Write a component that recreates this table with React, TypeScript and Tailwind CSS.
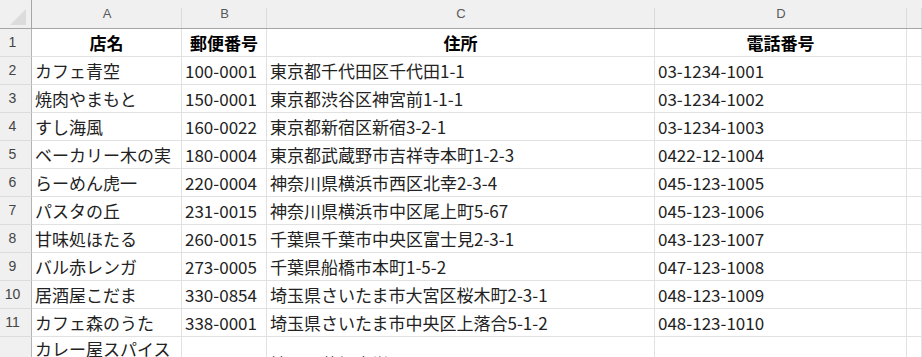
const columns = ['A', 'B', 'C', 'D', '']

const headers = ['店名', '郵便番号', '住所', '電話番号']

const rows: string[][] = [
  ['カフェ青空', '100-0001', '東京都千代田区千代田1-1', '03-1234-1001'],
  ['焼肉やまもと', '150-0001', '東京都渋谷区神宮前1-1-1', '03-1234-1002'],
  ['すし海風', '160-0022', '東京都新宿区新宿3-2-1', '03-1234-1003'],
  ['ベーカリー木の実', '180-0004', '東京都武蔵野市吉祥寺本町1-2-3', '0422-12-1004'],
  ['らーめん虎一', '220-0004', '神奈川県横浜市西区北幸2-3-4', '045-123-1005'],
  ['パスタの丘', '231-0015', '神奈川県横浜市中区尾上町5-67', '045-123-1006'],
  ['甘味処ほたる', '260-0015', '千葉県千葉市中央区富士見2-3-1', '043-123-1007'],
  ['バル赤レンガ', '273-0005', '千葉県船橋市本町1-5-2', '047-123-1008'],
  ['居酒屋こだま', '330-0854', '埼玉県さいたま市大宮区桜木町2-3-1', '048-123-1009'],
  ['カフェ森のうた', '338-0001', '埼玉県さいたま市中央区上落合5-1-2', '048-123-1010'],
]

const font = { fontFamily: '"Noto Sans CJK JP", "Noto Sans", sans-serif' }

function Corner() {
  return (
    <div className="h-[29px] border-r border-b border-[#a6a6a6] bg-[#f0f0f0] flex items-end justify-end pr-[5px] pb-[3px]">
      <svg width="16" height="16" viewBox="0 0 16 16">
        <polygon points="0,16 16,0 16,16" fill="#dcdcdc" />
      </svg>
    </div>
  )
}

function ColHeader({ label }: { label: string }) {
  return (
    <div className="relative h-[29px] border-b border-[#a6a6a6] bg-[#f0f0f0] flex items-center justify-center text-[13px] text-[#5a5a5a] font-['Liberation_Sans',sans-serif]">
      {label}
      <span className="absolute right-0 top-[8px] bottom-0 w-px bg-[#dadada]" />
    </div>
  )
}

function RowHeader({ n, tall }: { n: number; tall?: boolean }) {
  return (
    <div
      className={`${tall ? 'h-[54px]' : 'h-[28px]'} border-r border-b border-r-[#b4b4b4] border-b-[#dcdcdc] bg-[#f0f0f0] flex items-center justify-center pr-[6px] text-[14px] text-[#444] font-['Liberation_Sans',sans-serif]`}
    >
      {n}
    </div>
  )
}

function Cell({ children, bold, tall, top }: { children?: React.ReactNode; bold?: boolean; tall?: boolean; top?: boolean }) {
  return (
    <div
      style={font}
      className={`${tall ? 'h-[54px]' : 'h-[28px]'} overflow-hidden border-r border-b border-[#e1e1e1] flex ${top ? 'items-start pt-[1px]' : 'items-center'} text-[17px] leading-[22px] whitespace-nowrap ${
        bold ? 'justify-center font-bold text-black' : 'pl-[3px] text-[#222]'
      }`}
    >
      {children}
    </div>
  )
}

function App() {
  return (
    <div className="w-[922px] h-[357px] overflow-hidden bg-white">
      <div className="grid grid-cols-[32px_150px_85px_388px_252px_1fr]">
        <Corner />
        {columns.map((c, i) => (
          <ColHeader key={i} label={c} />
        ))}

        <RowHeader n={1} />
        {headers.map((h) => (
          <Cell key={h} bold>
            {h}
          </Cell>
        ))}
        <Cell />

        {rows.map((r, i) => (
          <div key={i} className="contents">
            <RowHeader n={i + 2} />
            {r.map((v, j) => (
              <Cell key={j}>{v}</Cell>
            ))}
            <Cell />
          </div>
        ))}

        <RowHeader n={12} tall />
        <Cell tall top>
          <span className="whitespace-normal">カレー屋スパイス<br />ハウス</span>
        </Cell>
        <Cell tall>340-0011</Cell>
        <Cell tall>埼玉県草加市栄町1-2-3</Cell>
        <Cell tall>048-123-1011</Cell>
        <Cell tall />
      </div>
    </div>
  )
}

export default App
